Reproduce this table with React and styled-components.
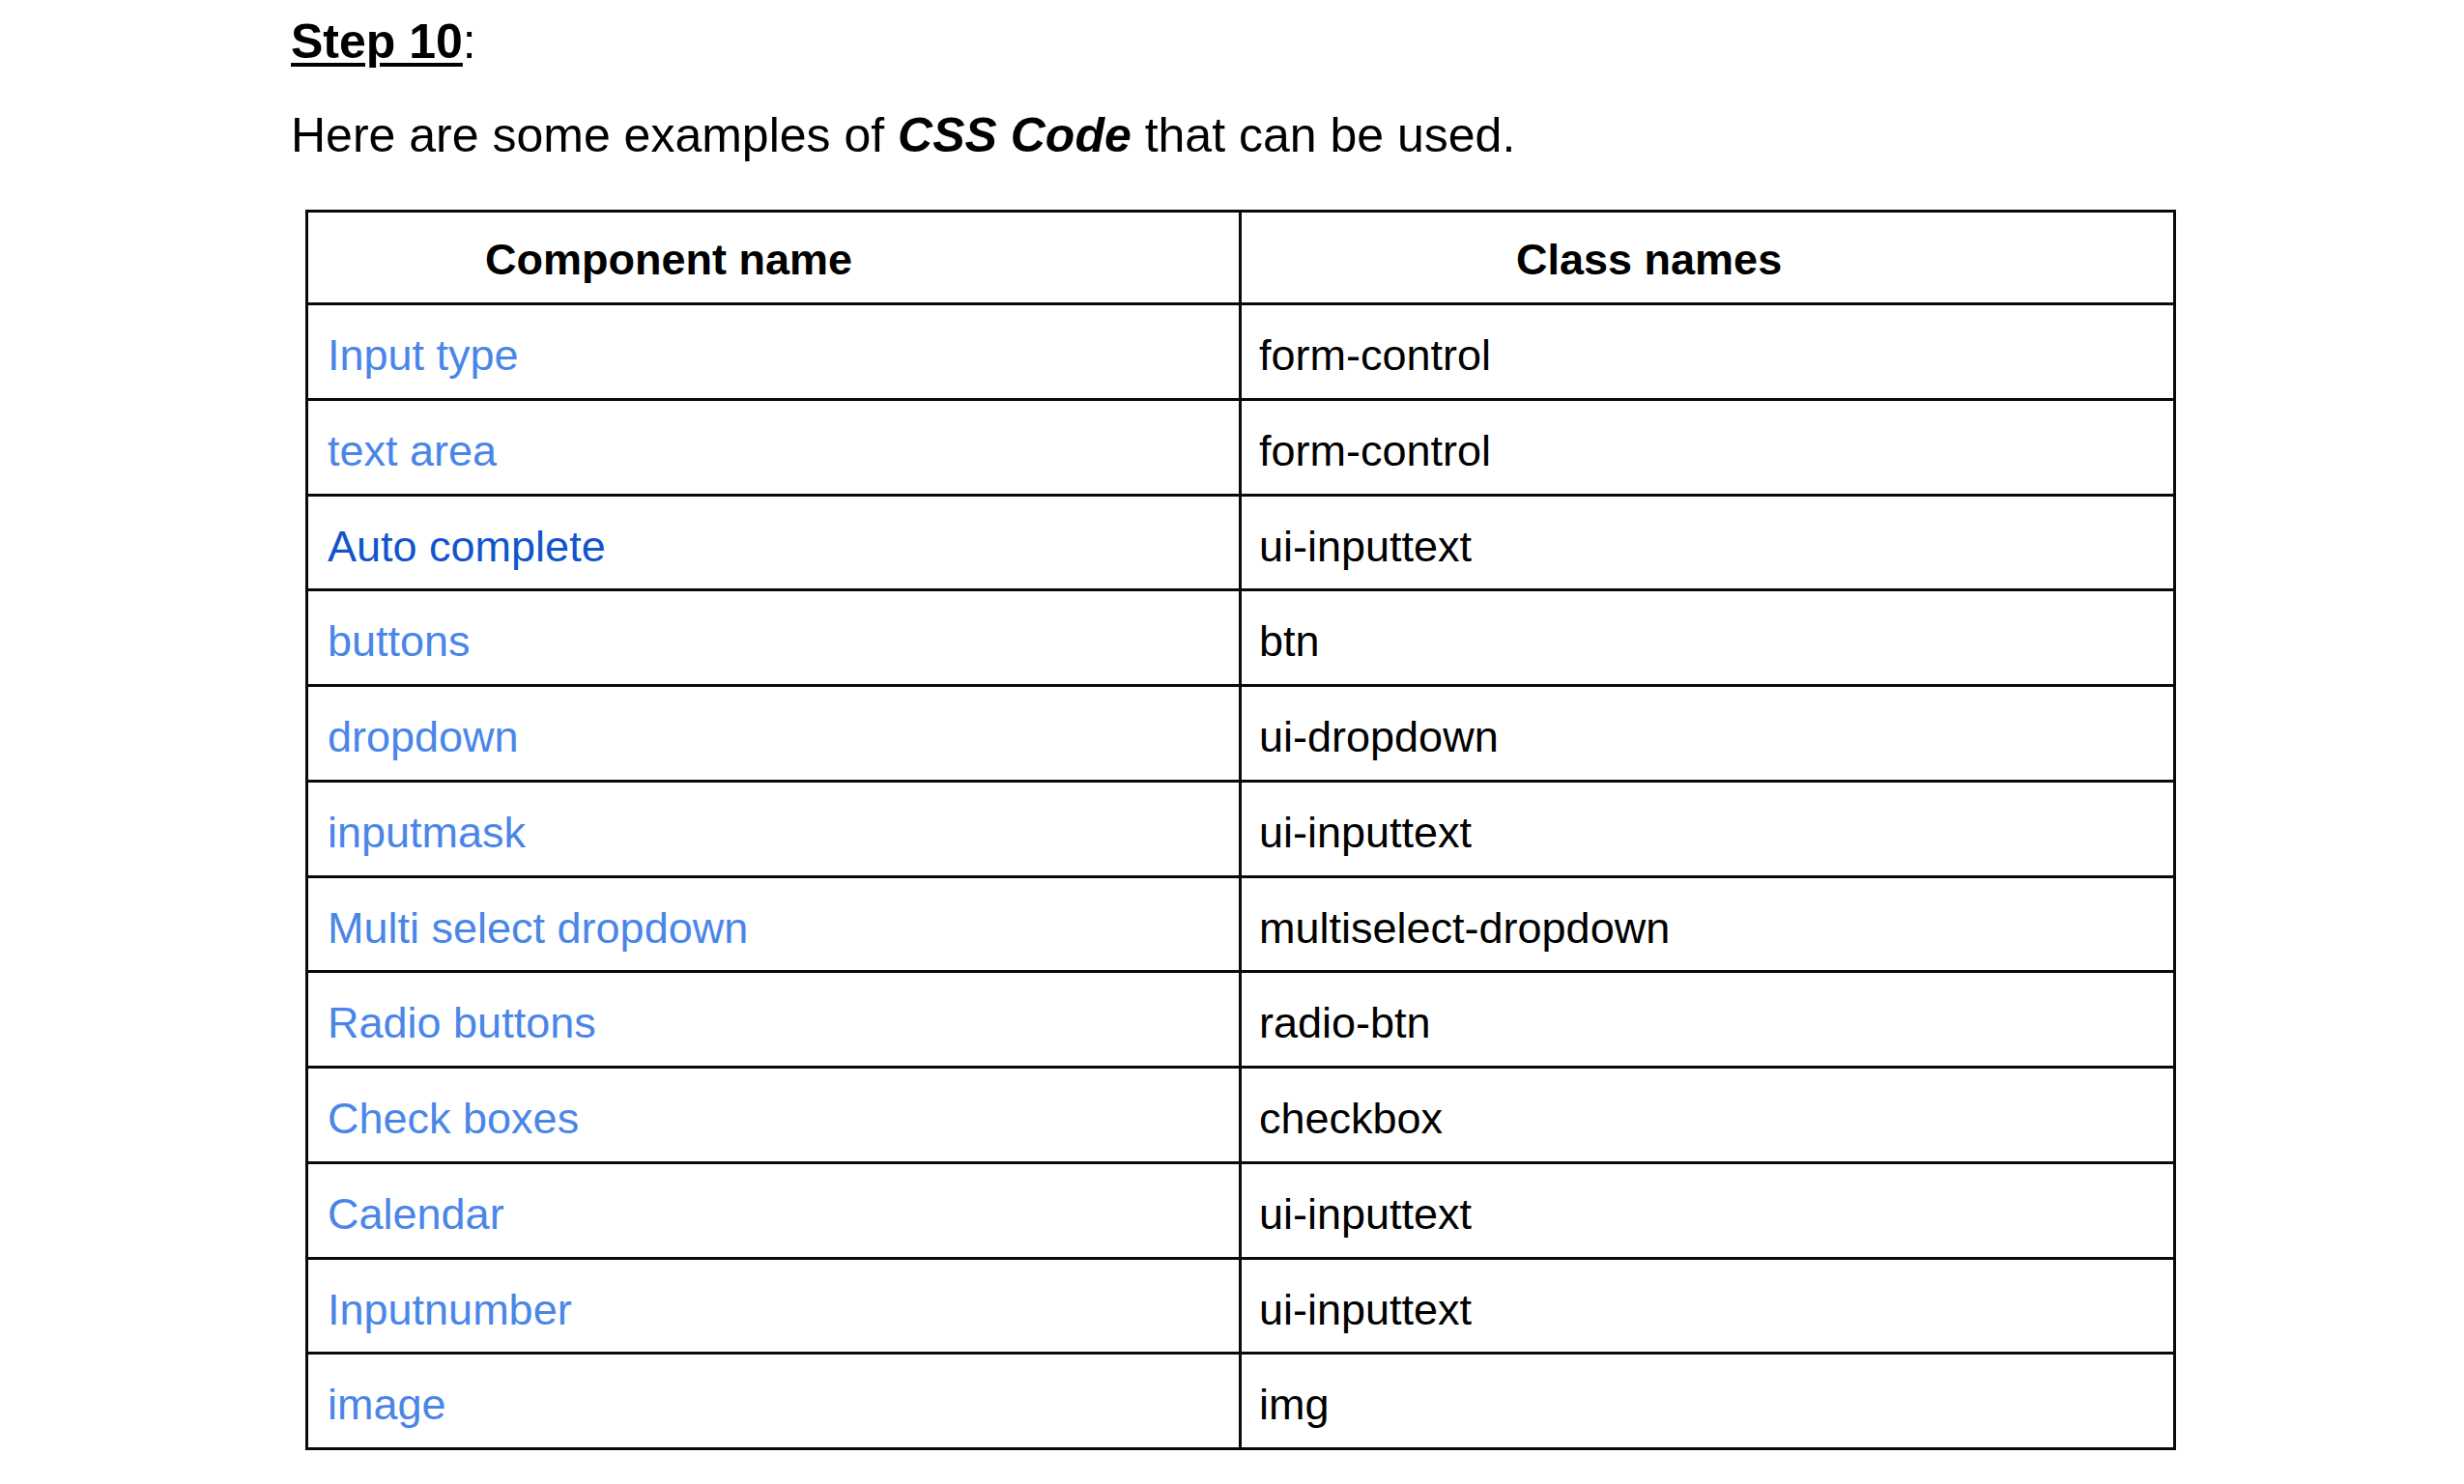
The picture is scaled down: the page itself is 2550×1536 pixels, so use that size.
import React from "react";
import styled, { createGlobalStyle } from "styled-components";

const GlobalStyle = createGlobalStyle`
  html, body { margin: 0; padding: 0; background: #ffffff; }
  body { font-family: "Liberation Sans", Arial, sans-serif; color: #000; }
`;

const Page = styled.div`
  padding: 14px 0 40px 301px;
  font-family: "Liberation Sans", Arial, sans-serif;
`;

const Heading = styled.div`
  font-size: 50px;
  line-height: 58px;
  height: 58px;
`;

const StepLabel = styled.span`
  font-weight: bold;
  text-decoration: underline;
  text-decoration-thickness: 4px;
  text-underline-offset: 5px;
`;

const Intro = styled.p`
  margin: 39px 0 0 0;
  font-size: 50px;
  line-height: 58px;
`;

const Emph = styled.b`
  font-style: italic;
  font-weight: bold;
`;

const Table = styled.div`
  margin: 48px 0 0 15px;
  display: grid;
  grid-template-columns: 966px 967px;
  width: max-content;
  border-top: 3px solid #0a0a0a;
  border-left: 3px solid #0a0a0a;
  font-family: "Liberation Sans", Arial, sans-serif;
`;

const Cell = styled.div`
  box-sizing: border-box;
  height: ${(p) => (p.$head ? "96px" : "98.75px")};
  border-right: 3px solid #0a0a0a;
  border-bottom: 3px solid #0a0a0a;
  padding-left: ${(p) => p.$indent}px;
  padding-top: ${(p) => (p.$head ? "23px" : "26px")};
  font-size: 45px;
  line-height: 52px;
  white-space: nowrap;
  font-weight: ${(p) => (p.$head ? "bold" : "normal")};
  color: ${(p) => p.$color || "#000"};
`;

const rows = [
  ["Input type", "form-control", "#4a86e8"],
  ["text area", "form-control", "#4a86e8"],
  ["Auto complete", "ui-inputtext", "#1155cc"],
  ["buttons", "btn", "#4a86e8"],
  ["dropdown", "ui-dropdown", "#4a86e8"],
  ["inputmask", "ui-inputtext", "#4a86e8"],
  ["Multi select dropdown", "multiselect-dropdown", "#4a86e8"],
  ["Radio buttons", "radio-btn", "#4a86e8"],
  ["Check boxes", "checkbox", "#4a86e8"],
  ["Calendar", "ui-inputtext", "#4a86e8"],
  ["Inputnumber", "ui-inputtext", "#4a86e8"],
  ["image", "img", "#4a86e8"],
];

export default function App() {
  return (
    <>
      <GlobalStyle />
      <Page>
        <Heading>
          <StepLabel>Step 10</StepLabel>:
        </Heading>
        <Intro>
          Here are some examples of <Emph>CSS Code</Emph> that can be used.
        </Intro>
        <Table>
          <Cell $head $indent={183}>Component name</Cell>
          <Cell $head $indent={284}>Class names</Cell>
          {rows.map(([name, cls, color]) => (
            <React.Fragment key={name}>
              <Cell $indent={20} $color={color}>{name}</Cell>
              <Cell $indent={18}>{cls}</Cell>
            </React.Fragment>
          ))}
        </Table>
      </Page>
    </>
  );
}
